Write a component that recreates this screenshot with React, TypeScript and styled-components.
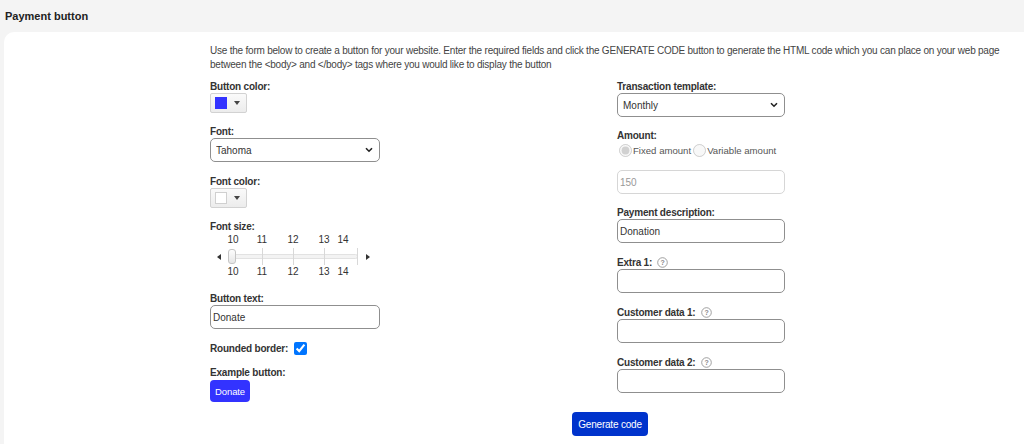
import React from "react";
import styled, { createGlobalStyle } from "styled-components";

const Global = createGlobalStyle`
  html, body { margin: 0; padding: 0; }
  body {
    background: #f4f4f4;
    font-family: "Liberation Sans", Arial, sans-serif;
    color: #333;
    overflow: hidden;
  }
`;

const Header = styled.div`
  height: 32px;
  display: flex;
  align-items: center;
  padding-left: 5px;
  font-size: 11px;
  font-weight: bold;
  color: #222;
`;

const Card = styled.div`
  margin-left: 4px;
  background: #fff;
  border-top-left-radius: 10px;
  padding: 12px 0 40px 206px;
  min-height: 420px;
`;

const Content = styled.div`
  width: 810px;
`;

const Intro = styled.p`
  margin: 0 0 8px;
  font-size: 10px;
  letter-spacing: -0.22px;
  line-height: 14px;
  color: #444;
  white-space: nowrap;
`;

const Columns = styled.div`
  display: grid;
  grid-template-columns: 407px 1fr;
`;

const Column = styled.div`
  display: flex;
  flex-direction: column;
`;

const Field = styled.div<{ $gap?: number }>`
  display: flex;
  flex-direction: column;
  align-items: flex-start;
  margin-bottom: ${(p) => (p.$gap ?? 12)}px;
`;

const Label = styled.label`
  display: flex;
  align-items: center;
  gap: 5px;
  height: 13px;
  font-size: 10px;
  letter-spacing: -0.2px;
  font-weight: bold;
  color: #333;
`;

const Picker = styled.div`
  width: 37px;
  height: 20px;
  box-sizing: border-box;
  border: 1px solid #d2d2d2;
  border-radius: 2px;
  background: linear-gradient(#fafafa, #ececec);
  display: flex;
  align-items: center;
  padding-left: 4px;
  gap: 7px;
`;

const Swatch = styled.span<{ $color: string; $border?: boolean }>`
  width: 12px;
  height: 12px;
  background: ${(p) => p.$color};
  box-sizing: border-box;
  border: ${(p) => (p.$border ? "1px solid #d0d0d0" : "none")};
`;

const Caret = styled.span`
  width: 0;
  height: 0;
  border-left: 3px solid transparent;
  border-right: 3px solid transparent;
  border-top: 4px solid #444;
`;

const SelectBox = styled.div<{ $w: number }>`
  position: relative;
  width: ${(p) => p.$w}px;
  height: 24px;
`;

const Select = styled.select`
  appearance: none;
  width: 100%;
  height: 100%;
  box-sizing: border-box;
  border: 1px solid #8f8f8f;
  border-radius: 5px;
  background: #fff;
  font-family: "Liberation Sans", Arial, sans-serif;
  font-size: 10px;
  color: #333;
  padding: 0 5px;
  outline: none;
`;

const Chevron = styled.svg`
  position: absolute;
  right: 7px;
  top: 9px;
  pointer-events: none;
`;

const Input = styled.input<{ $w: number }>`
  width: ${(p) => p.$w}px;
  height: 24px;
  box-sizing: border-box;
  border: 1px solid #8f8f8f;
  border-radius: 5px;
  font-family: "Liberation Sans", Arial, sans-serif;
  font-size: 10px;
  color: #333;
  padding: 0 2px;
  outline: none;
  background: #fff;
  &:disabled {
    border-color: #d6d6d6;
    color: #999;
    background: #fff;
  }
`;

const Slider = styled.div`
  position: relative;
  width: 170px;
  height: 47px;
`;

const TickLabel = styled.span<{ $x: number; $top: number }>`
  position: absolute;
  left: ${(p) => p.$x}px;
  top: ${(p) => p.$top}px;
  transform: translateX(-50%);
  font-size: 10px;
  color: #333;
`;

const Track = styled.div`
  position: absolute;
  left: 20px;
  top: 21px;
  width: 128px;
  height: 5px;
  box-sizing: border-box;
  border: 1px solid #e2e2e2;
  border-radius: 3px;
  background: #f3f3f3;
`;

const Tick = styled.span<{ $x: number }>`
  position: absolute;
  left: ${(p) => p.$x}px;
  top: 15px;
  width: 1px;
  height: 17px;
  background: #d8d8d8;
`;

const Thumb = styled.span`
  position: absolute;
  left: 18px;
  top: 16px;
  width: 8px;
  height: 15px;
  box-sizing: border-box;
  border: 1px solid #c5c5c5;
  border-radius: 3px;
  background: linear-gradient(#fdfdfd, #e6e6e6);
`;

const Arrow = styled.span<{ $dir: "l" | "r"; $x: number }>`
  position: absolute;
  left: ${(p) => p.$x}px;
  top: 21px;
  width: 0;
  height: 0;
  border-top: 3px solid transparent;
  border-bottom: 3px solid transparent;
  ${(p) =>
    p.$dir === "l"
      ? "border-right: 4px solid #333;"
      : "border-left: 4px solid #333;"}
`;

const InlineRow = styled.div`
  display: flex;
  align-items: center;
  height: 14px;
  margin-bottom: 11px;
  margin-top: -1px;
`;

const Check = styled.input`
  width: 13px;
  height: 13px;
  margin: 0 0 0 6px;
  accent-color: #0075ff;
`;

const RadioRow = styled.div`
  display: flex;
  align-items: center;
  height: 14px;
  font-size: 9.6px;
  color: #555;
  margin: 1px 0 0;
`;

const Radio = styled.input`
  width: 13px;
  height: 13px;
  margin: 0 1px 0 2px;
`;

const Donate = styled.button`
  height: 22px;
  padding: 0 5px;
  border: none;
  border-radius: 4px;
  background: #3333ff;
  color: #fff;
  font-family: "Liberation Sans", Arial, sans-serif;
  font-size: 9.5px;
  letter-spacing: -0.1px;
  margin-top: 1px;
`;

const Footer = styled.div`
  display: flex;
  justify-content: center;
  width: 800px;
  margin-top: 10px;
`;

const Generate = styled.button`
  height: 24px;
  padding: 0 6px;
  border: none;
  border-radius: 4px;
  background: #0033cc;
  color: #fff;
  font-family: "Liberation Sans", Arial, sans-serif;
  font-size: 10px;
  letter-spacing: -0.2px;
`;

const Help = () => (
  <svg width="11" height="11" viewBox="0 0 11 11">
    <circle cx="5.5" cy="5.5" r="4.8" fill="none" stroke="#888" strokeWidth="0.8" />
    <text x="5.5" y="8" textAnchor="middle" fontSize="7" fill="#888" fontFamily="Liberation Sans, Arial, sans-serif">?</text>
  </svg>
);

const ChevronIcon = () => (
  <Chevron width="8" height="6" viewBox="0 0 8 6">
    <path d="M1 1.2 L4 4.2 L7 1.2" fill="none" stroke="#222" strokeWidth="1.6" />
  </Chevron>
);

const ticks = [
  { v: 10, x: 23 },
  { v: 11, x: 52 },
  { v: 12, x: 83 },
  { v: 13, x: 114 },
  { v: 14, x: 133 },
];

export default function App() {
  return (
    <>
      <Global />
      <Header>Payment button</Header>
      <Card>
        <Content>
          <Intro>
            Use the form below to create a button for your website. Enter the required fields and click
            the GENERATE CODE button to generate the HTML code which you can place on your web page
            <br />
            between the &lt;body&gt; and &lt;/body&gt; tags where you would like to display the button
          </Intro>
          <Columns>
            <Column>
              <Field>
                <Label>Button color:</Label>
                <Picker>
                  <Swatch $color="#3333ff" />
                  <Caret />
                </Picker>
              </Field>
              <Field $gap={13}>
                <Label>Font:</Label>
                <SelectBox $w={170}>
                  <Select defaultValue="Tahoma">
                    <option>Tahoma</option>
                  </Select>
                  <ChevronIcon />
                </SelectBox>
              </Field>
              <Field>
                <Label>Font color:</Label>
                <Picker>
                  <Swatch $color="#ffffff" $border />
                  <Caret />
                </Picker>
              </Field>
              <Field $gap={12}>
                <Label>Font size:</Label>
                <Slider>
                  {ticks.map((t) => (
                    <TickLabel key={"t" + t.v} $x={t.x} $top={1}>
                      {t.v}
                    </TickLabel>
                  ))}
                  <Arrow $dir="l" $x={7} />
                  <Track />
                  <Tick $x={52} />
                  <Tick $x={83} />
                  <Tick $x={114} />
                  <Tick $x={147} />
                  <Thumb />
                  <Arrow $dir="r" $x={156} />
                  {ticks.map((t) => (
                    <TickLabel key={"b" + t.v} $x={t.x} $top={33}>
                      {t.v}
                    </TickLabel>
                  ))}
                </Slider>
              </Field>
              <Field $gap={13}>
                <Label>Button text:</Label>
                <Input $w={170} defaultValue="Donate" />
              </Field>
              <InlineRow>
                <Label as="span">Rounded border:</Label>
                <Check type="checkbox" defaultChecked />
              </InlineRow>
              <Field $gap={0}>
                <Label>Example button:</Label>
                <Donate>Donate</Donate>
              </Field>
            </Column>
            <Column>
              <Field $gap={12}>
                <Label>Transaction template:</Label>
                <SelectBox $w={168}>
                  <Select defaultValue="Monthly">
                    <option>Monthly</option>
                  </Select>
                  <ChevronIcon />
                </SelectBox>
              </Field>
              <Field $gap={13}>
                <Label>Amount:</Label>
                <RadioRow>
                  <Radio type="radio" name="amt" defaultChecked disabled />
                  Fixed amount
                  <Radio type="radio" name="amt" disabled />
                  Variable amount
                </RadioRow>
              </Field>
              <Field $gap={12}>
                <Input $w={168} defaultValue="150" disabled />
              </Field>
              <Field $gap={13}>
                <Label>Payment description:</Label>
                <Input $w={168} defaultValue="Donation" />
              </Field>
              <Field $gap={13}>
                <Label>
                  Extra 1: <Help />
                </Label>
                <Input $w={168} />
              </Field>
              <Field $gap={13}>
                <Label>
                  Customer data 1: <Help />
                </Label>
                <Input $w={168} />
              </Field>
              <Field $gap={0}>
                <Label>
                  Customer data 2: <Help />
                </Label>
                <Input $w={168} />
              </Field>
            </Column>
          </Columns>
          <Footer>
            <Generate>Generate code</Generate>
          </Footer>
        </Content>
      </Card>
    </>
  );
}
